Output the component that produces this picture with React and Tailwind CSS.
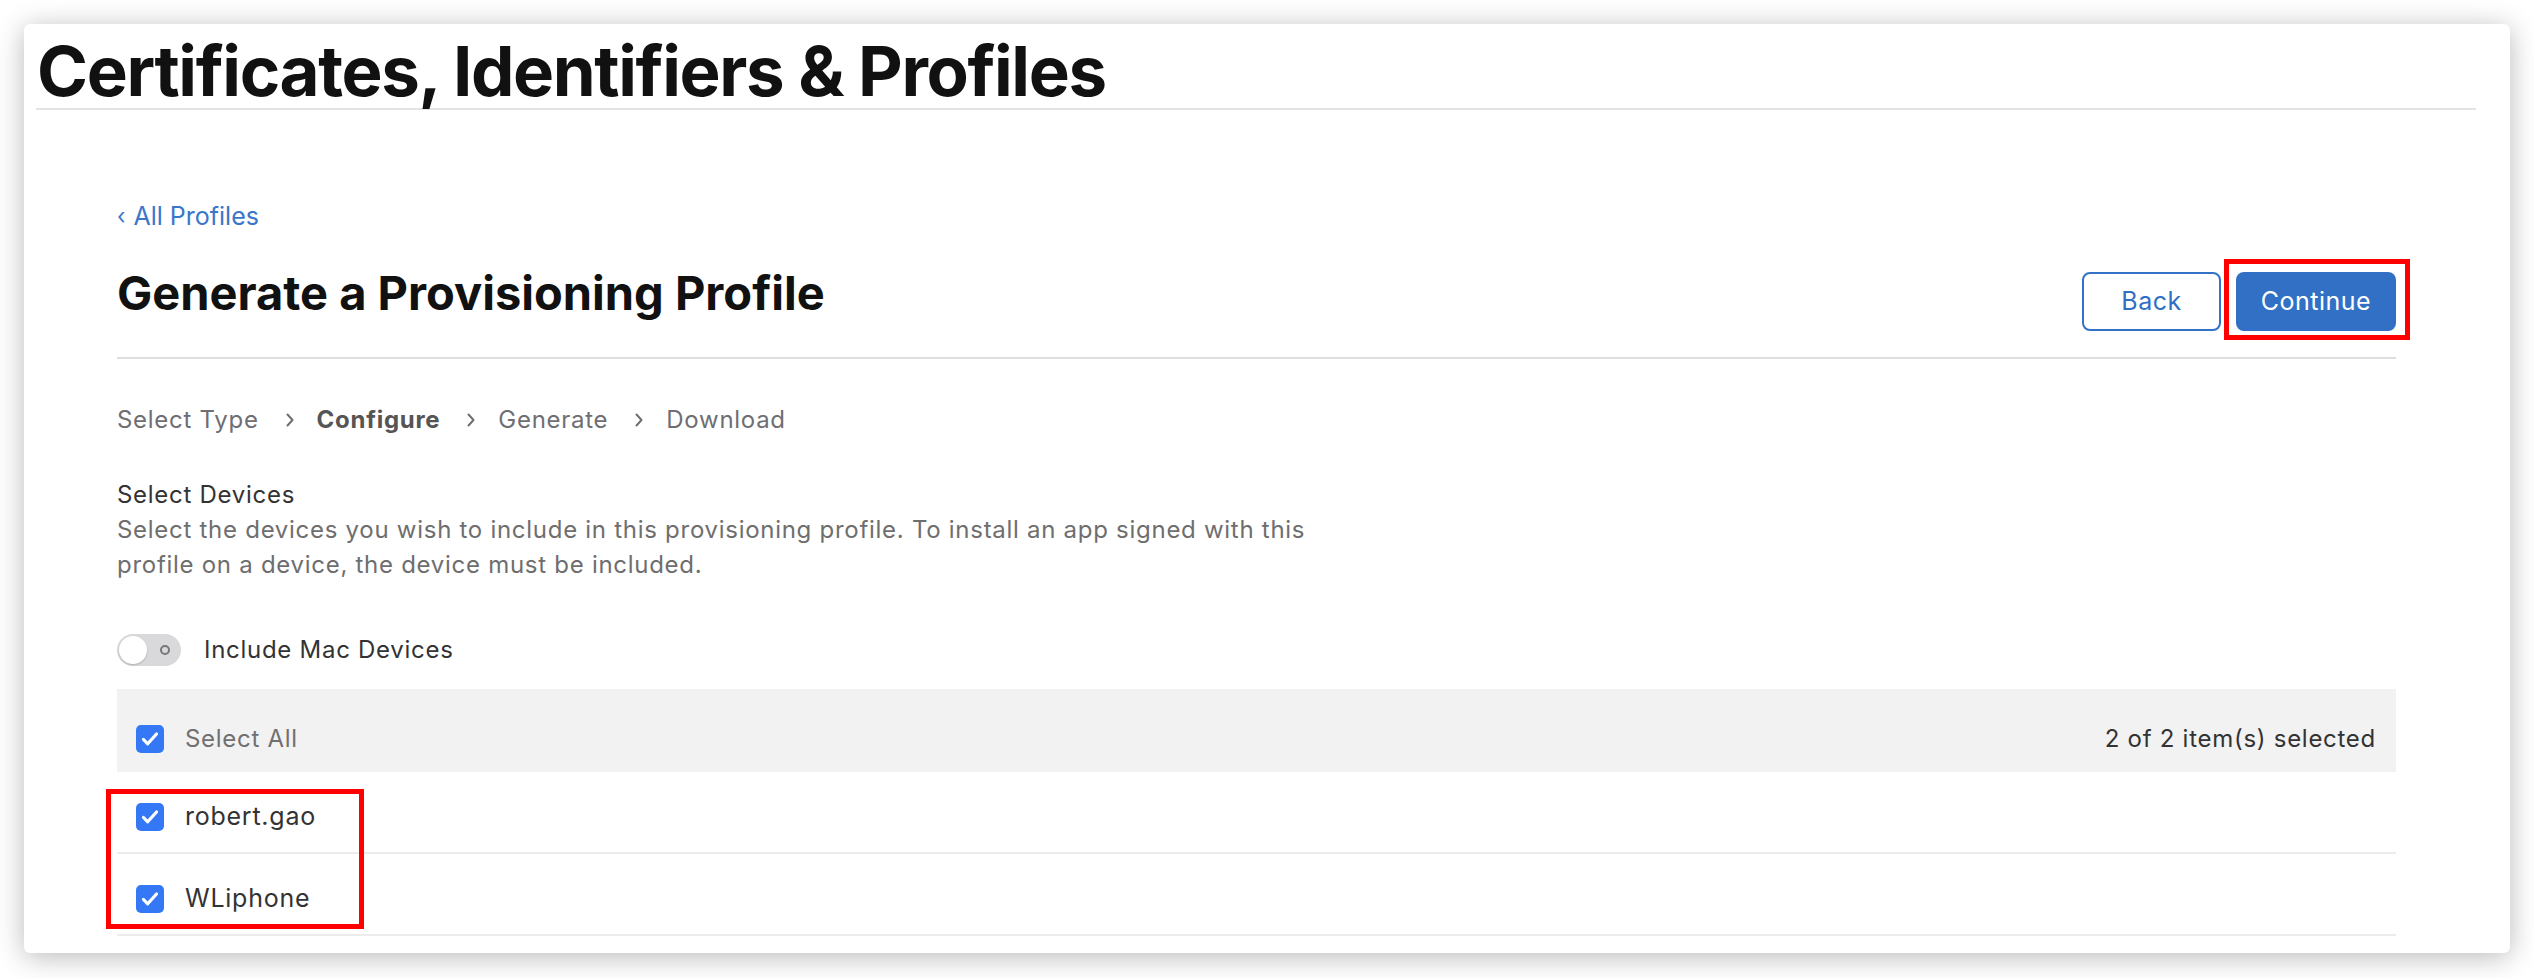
import React from "react";

function Check() {
  return (
    <span className="flex h-[28px] w-[28px] shrink-0 items-center justify-center rounded-[5px] bg-[#3478f6]">
      <svg width="22" height="22" viewBox="0 0 22 22" fill="none">
        <path d="M4.5 11.5l4.2 4.3L17.5 6" stroke="#fff" strokeWidth="3.2" strokeLinecap="round" strokeLinejoin="round" />
      </svg>
    </span>
  );
}

function Chevron() {
  return (
    <svg width="10" height="16" viewBox="0 0 10 16" fill="none" className="ml-[26px] mr-[22px]">
      <path d="M2.5 2.5l5 5.5-5 5.5" stroke="#6e6e73" strokeWidth="2" strokeLinecap="round" strokeLinejoin="round" />
    </svg>
  );
}

const devices = ["robert.gao", "WLiphone"];

export default function App() {
  return (
    <div className="min-h-screen bg-white pl-[24px] pt-[24px] font-['Inter',sans-serif]">
      <div className="h-[929px] w-[2486px] overflow-hidden rounded-[6px] bg-white shadow-[0_4px_28px_rgba(0,0,0,0.28)]">
        {/* page title */}
        <div className="ml-[12px] w-[2440px] pt-[11px]">
          <h1 className="pl-[1px] text-[69px] font-bold leading-[72px] tracking-[-0.02em] text-[#111]">
            Certificates, Identifiers &amp; Profiles
          </h1>
          <div className="mt-[1px] h-[2px] bg-[#e3e3e3]" />
        </div>

        <div className="ml-[93px] w-[2279px]">
          <a className="mt-[94px] flex items-center text-[25px] leading-[24px] text-[#3a76c9]">
            <span className="mr-[8px] text-[22px]">‹</span>All Profiles
          </a>

          <div className="mt-[42px] flex items-start justify-between">
            <h2 className="text-[47px] font-bold leading-[45px] text-[#111]">Generate a Provisioning Profile</h2>
            <div className="mt-[2px] flex gap-[15px]">
              <button className="h-[59px] w-[139px] rounded-[8px] border-2 border-[#3471c9] text-[25px] tracking-[0.02em] text-[#2f6fc4]">
                Back
              </button>
              <div className="relative">
                <button className="h-[59px] w-[160px] rounded-[8px] bg-[#3170c4] text-[25px] tracking-[0.02em] text-white">
                  Continue
                </button>
                <div className="absolute -bottom-[9px] -left-[12px] -right-[14px] -top-[13px] border-[5px] border-[#ff0000]" />
              </div>
            </div>
          </div>

          <div className="mt-[26px] h-[2px] bg-[#dedede]" />

          {/* steps */}
          <div className="mt-[50px] flex items-center text-[24px] leading-[22px] tracking-[0.03em] text-[#6e6e73]">
            <span>Select Type</span>
            <Chevron />
            <span className="font-bold text-[#555]">Configure</span>
            <Chevron />
            <span>Generate</span>
            <Chevron />
            <span>Download</span>
          </div>

          <div className="mt-[46px] text-[24px] leading-[35px] tracking-[0.03em]">
            <div className="text-[#333]">Select Devices</div>
            <p className="w-[1195px] text-[#6e6e6e]">
              Select the devices you wish to include in this provisioning profile. To install an app signed with this
              profile on a device, the device must be included.
            </p>
          </div>

          <div className="mt-[52px] flex items-center gap-[23px]">
            <div className="relative h-[32px] w-[64px] rounded-full bg-[#d9d9dc]">
              <span className="absolute left-[2px] top-[2px] h-[28px] w-[28px] rounded-full bg-white shadow-[0_1px_2px_rgba(0,0,0,0.2)]" />
              <span className="absolute left-[43px] top-[11px] h-[10px] w-[10px] rounded-full border-2 border-[#777]" />
            </div>
            <span className="text-[24px] leading-[32px] tracking-[0.03em] text-[#333]">Include Mac Devices</span>
          </div>

          {/* device table */}
          <div className="mt-[23px] flex h-[83px] items-center justify-between bg-[#f2f2f2] pl-[19px] pr-[20px] pt-[16px] text-[24px] tracking-[0.03em]">
            <div className="flex items-center gap-[21px]">
              <Check />
              <span className="text-[#707070]">Select All</span>
            </div>
            <span className="text-[#333]">2 of 2 item(s) selected</span>
          </div>

          <div className="relative">
            {devices.map((d) => (
              <div key={d} className="flex h-[82px] items-center gap-[21px] border-b-2 border-[#ececec] pl-[19px] pt-[9px]">
                <Check />
                <span className="text-[25px] tracking-[0.03em] text-[#333]">{d}</span>
              </div>
            ))}
            <div className="absolute left-[-11px] top-[17px] h-[140px] w-[258px] border-[5px] border-[#ff0000]" />
          </div>
        </div>
      </div>
    </div>
  );
}
